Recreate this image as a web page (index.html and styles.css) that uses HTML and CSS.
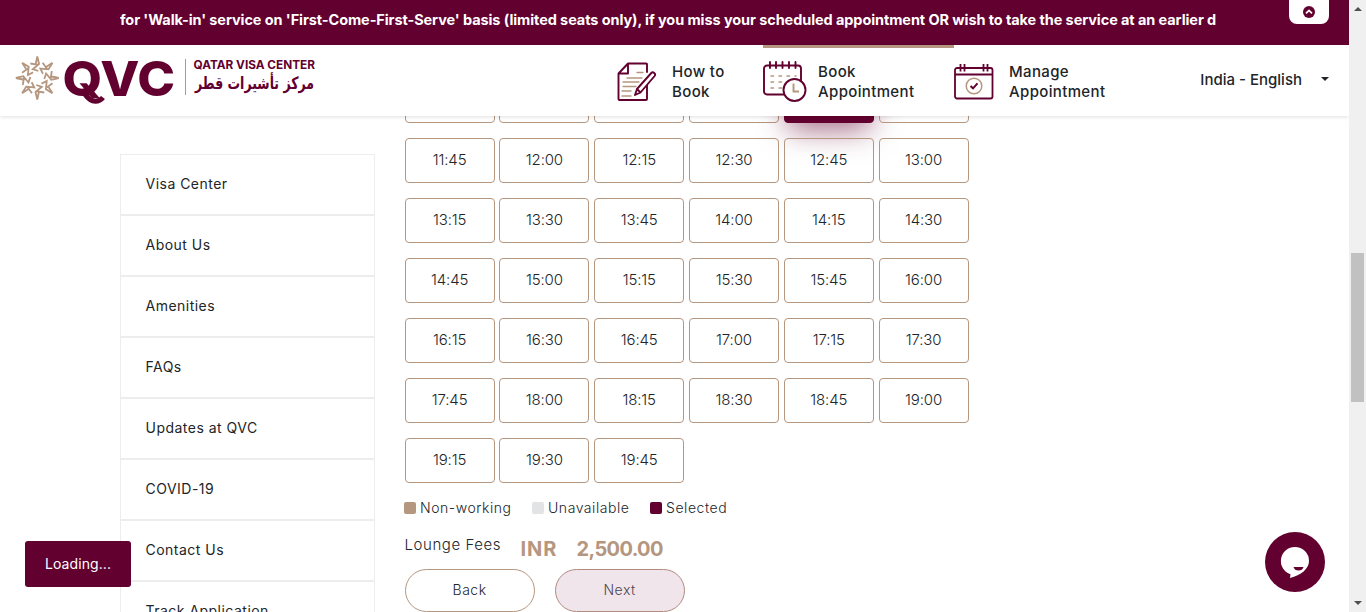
FILE: index.html
```html
<!DOCTYPE html>
<html lang="en">
<head>
<meta charset="utf-8">
<title>Qatar Visa Center</title>
<link rel="stylesheet" href="styles.css">
</head>
<body>
<div class="window">
<div class="page">
  <div class="notice">
    <div class="marquee"><span>for 'Walk-in' service on 'First-Come-First-Serve' basis (limited seats only), if you miss your scheduled appointment OR wish to take the service at an earlier d</span></div>
    <button class="collapse" aria-label="Hide notice">
      <svg width="12" height="12" viewBox="0 0 12 12"><circle cx="6" cy="6" r="6" fill="#62002f"/><path d="M3 7.3 6 4.4 9 7.3" fill="none" stroke="#fff" stroke-width="1.8"/></svg>
    </button>
  </div>
  <header class="header">
    <svg class="logo" width="320" height="60" viewBox="0 50 320 60">
      <defs><path id="arm" d="M0-21.5 1.800-14-4.500-8.800 1-7M0-21.500-1.500-14.500M-7-14.500 1.500-13.200"/></defs>
      <g transform="translate(37.3 78)" fill="none" stroke="#b5967f" stroke-width="1.800">
        <use href="#arm"/><use href="#arm" transform="rotate(45)"/><use href="#arm" transform="rotate(90)"/><use href="#arm" transform="rotate(135)"/><use href="#arm" transform="rotate(180)"/><use href="#arm" transform="rotate(225)"/><use href="#arm" transform="rotate(270)"/><use href="#arm" transform="rotate(315)"/>
      </g>
      <text class="logo-big" x="62.500" y="95.500" textLength="112.500" lengthAdjust="spacingAndGlyphs">QVC</text>
      <path d="M84 93q6 8.500 11.500 8.300 4.500 0 7.500-3.800" fill="none" stroke="#62002f" stroke-width="5"/>
      <path d="M185.500 59v36" stroke="#b5967f"/>
      <text class="logo-en" x="193.500" y="69" textLength="121.500" lengthAdjust="spacingAndGlyphs">QATAR VISA CENTER</text>
      <text class="logo-ar" x="314" y="89" direction="rtl" textLength="119" lengthAdjust="spacingAndGlyphs">مركز تأشيرات قطر</text>
    </svg>
    <nav class="nav">
      <a class="nav-item how">
        <svg width="40" height="40" viewBox="0 0 40 40" fill="none" stroke="#62002f" stroke-width="1.9" stroke-linejoin="round" stroke-linecap="round"><path d="M30 10V2.500Q30 1.500 29 1.500H11L1.500 11.500V37q0 1 1 1H29q1 0 1-1V23M11 1.500V11.500H1.500"/><path stroke="#b5967f" stroke-width="1.300" d="M20 10.500h6M10 16h15M6 20h16M6 24.500h13M5 29h9M5 34h9"/><path fill="#fff" d="m18 33 2-6L34.300 11q1.300-1.300 2.900 0t.4 3L23.500 30.500zM20 27l3.500 3.500"/></svg>
        <span>How to<br>Book</span>
      </a>
      <a class="nav-item book active">
        <svg width="44" height="42" viewBox="0 0 44 42" fill="none" stroke="#62002f" stroke-width="1.900" stroke-linecap="round"><rect x="1" y="4.500" width="37" height="29" rx="3"/><path d="M7 1v6M13 1v6M19.500 1v6M26 1v6M32.500 1v6"/><path stroke="#b5967f" stroke-width="1.500" stroke-dasharray="2.500 5.500" d="M8 15h25M8 21h25M8 27h16"/><circle cx="31.500" cy="29" r="11" fill="#fff"/><path stroke="#b5967f" stroke-linecap="butt" d="M30.500 22.500v8H36"/></svg>
        <span>Book<br>Appointment</span>
      </a>
      <a class="nav-item manage">
        <svg width="40" height="36" viewBox="0 0 40 36" fill="none" stroke="#62002f" stroke-width="1.800"><rect x="1" y="4" width="37.500" height="30.500" rx="2"/><path d="M1 10.500h37.500M6.500 0v7.500M10.500 0v7.500M29.500 0v7.500M33.500 0v7.500"/><circle cx="20" cy="22" r="7.800" stroke="#b5967f" stroke-width="1.500"/><path stroke-width="2" d="m16.500 22 2.500 2.300 4.500-5"/></svg>
        <span>Manage<br>Appointment</span>
      </a>
    </nav>
    <div class="language"><span>India - English</span><i class="caret"></i></div>
  </header>
  <main class="content">
    <aside class="sidebar">
      <a>Visa Center</a><a>About Us</a><a>Amenities</a><a>FAQs</a><a>Updates at QVC</a><a>COVID-19</a><a>Contact Us</a><a>Track Application</a>
    </aside>
    <section class="booking">
      <div class="slots">
        <b></b><b></b><b></b><b></b><b class="selected"></b><b></b>
        <b>11:45</b><b>12:00</b><b>12:15</b><b>12:30</b><b>12:45</b><b>13:00</b>
        <b>13:15</b><b>13:30</b><b>13:45</b><b>14:00</b><b>14:15</b><b>14:30</b>
        <b>14:45</b><b>15:00</b><b>15:15</b><b>15:30</b><b>15:45</b><b>16:00</b>
        <b>16:15</b><b>16:30</b><b>16:45</b><b>17:00</b><b>17:15</b><b>17:30</b>
        <b>17:45</b><b>18:00</b><b>18:15</b><b>18:30</b><b>18:45</b><b>19:00</b>
        <b>19:15</b><b>19:30</b><b>19:45</b>
      </div>
      <div class="legend">
        <span class="key non-working">Non-working</span><span class="key unavailable">Unavailable</span><span class="key chosen">Selected</span>
      </div>
      <div class="fees"><span class="fees-label">Lounge Fees</span><strong class="currency">INR</strong><strong class="amount">2,500.00</strong></div>
      <div class="actions"><button class="pill">Back</button><button class="pill next">Next</button></div>
    </section>
  </main>
</div>
<div class="scrollbar"><i class="up"></i><i class="thumb"></i><i class="down"></i></div>
</div>
<div class="loading">Loading...</div>
<div class="chat">
  <svg width="60" height="60" viewBox="0 0 60 60"><circle cx="30" cy="30" r="30" fill="#62002f"/><path d="M30 15a14 14 0 0 1 14 14c0 8-8 14-19 17l.5-3.700A14 14 0 0 1 30 15z" fill="#fff"/><path d="M28.500 35h10q-1 3.500-5 3.500t-5-3.500z" fill="#62002f"/></svg>
</div>
</body>
</html>
```
FILE: styles.css
```css
* { box-sizing: border-box; }
body { margin: 0; height: 612px; overflow: hidden; background: #fff; color: #212529; font: 14px/20px Inter, sans-serif; }
button { font: inherit; color: inherit; }
.window { display: flex; height: 612px; }
.page { flex: 1; height: 612px; overflow: hidden; display: flex; flex-direction: column; }
.notice { height: 45px; flex: none; background: #62002f; display: flex; justify-content: space-between; align-items: flex-start; padding: 0 20px 0 120px; }
.marquee { width: 1096px; height: 40px; overflow: hidden; white-space: nowrap; color: #fff; font-weight: 700; font-size: 14.500px; line-height: 40px; letter-spacing: -0.085px; }
.collapse { width: 40px; height: 24px; padding: 0; border: 0; border-radius: 0 0 8px 8px; background: #fff; display: flex; align-items: center; justify-content: center; }
.header { position: relative; z-index: 2; height: 71px; flex: none; display: flex; background: #fff; box-shadow: 0 1px 4px rgba(0,0,0,.13); }
.logo { margin-top: 5px; flex: none; }
.logo text { fill: #62002f; font-family: Inter, sans-serif; font-weight: 700; }
.logo .logo-big { font-size: 48px; font-weight: 800; }
.logo .logo-en { font-size: 11.500px; }
.logo .logo-ar { font-family: "DejaVu Sans", sans-serif; font-size: 17px; }
.nav { display: flex; margin-left: 297px; }
.nav-item { display: flex; height: 71px; border-top: 3px solid transparent; font-size: 15px; font-weight: 500; }
.nav-item span { padding-top: 14px; letter-spacing: .36px; }
.nav-item svg { flex: none; }
.nav-item.active { border-color: #b5967f; }
.how { width: 146px; }
.how svg { margin: 14px 15px 0 0; }
.book { width: 191px; }
.book svg { margin: 13px 11px 0 0; }
.manage { width: 170px; }
.manage svg { margin: 16px 15px 0 0; }
.language { margin: 25px 0 0 auto; padding-right: 20px; display: flex; font-size: 15px; font-weight: 500; }
.caret { margin: 7px 0 0 19px; width: 8px; height: 4px; border: 4px solid transparent; border-top-color: #212529; border-bottom: 0; }
.content { display: flex; padding-left: 120px; height: 496px; }
.sidebar { width: 255px; flex: none; margin-top: 38px; }
.sidebar a { display: flex; align-items: center; height: 61px; border: 1px solid #ededed; padding: 0 0 2px 24.500px; letter-spacing: .48px; }
.booking { margin: -38px 0 0 29.600px; width: 564.400px; flex: none; }
.slots { display: grid; grid-template-columns: repeat(6, 90px); grid-auto-rows: 45px; gap: 15px 4.800px; }
.slots b { border: 1px solid #b5967f; border-radius: 4px; display: flex; align-items: center; justify-content: center; padding-bottom: 2px; font-weight: 300; font-size: 15px; letter-spacing: -.15px; }
.slots .selected { background: #62002f; border-color: #62002f; box-shadow: 0 10px 30px -4px rgba(98,0,47,.6); }
.legend { display: flex; margin: 15px 0 0 -.6px; font-weight: 300; letter-spacing: .55px; }
.key { display: flex; align-items: center; gap: 4px; height: 20px; }
.key::before { content: ""; width: 12px; height: 12px; border-radius: 2px; background: #b5967f; }
.non-working { width: 128px; }
.unavailable { width: 118px; }
.unavailable::before { background: #e2e3e5; }
.chosen::before { background: #62002f; }
.fees { display: flex; height: 30px; margin-top: 16px; }
.fees-label { width: 116px; font-size: 15px; font-weight: 300; line-height: 22px; letter-spacing: .55px; }
.fees strong { color: #b5967f; font-size: 20px; line-height: 30px; font-weight: 700; }
.currency { width: 56px; letter-spacing: .9px; }
.amount { letter-spacing: -.65px; }
.actions { display: flex; gap: 20px; margin-top: 5px; }
.pill { width: 130px; height: 43px; padding: 0 0 1px; border: 1px solid #b5967f; border-radius: 22px; background: #fff; font-weight: 300; letter-spacing: .5px; }
.pill.next { background: #f0e5eb; border-color: #b28a80; color: #4b4652; }
.scrollbar { width: 17px; background: #f0f0f0; display: flex; flex-direction: column; align-items: center; }
.up { margin-top: 7px; border: 4px solid transparent; border-top: 0; border-bottom-color: #505050; }
.thumb { margin-top: 242px; width: 13px; height: 149px; background: #c1c1c1; }
.down { margin-top: 199px; border: 4px solid transparent; border-bottom: 0; border-top-color: #505050; }
.loading { position: fixed; z-index: 4; left: 25px; top: 541px; width: 106px; height: 46px; border-radius: 3px; background: #62002f; color: #fff; text-align: center; line-height: 46px; letter-spacing: .1px; }
.chat { position: fixed; z-index: 4; left: 1265px; top: 532px; height: 60px; }
```
